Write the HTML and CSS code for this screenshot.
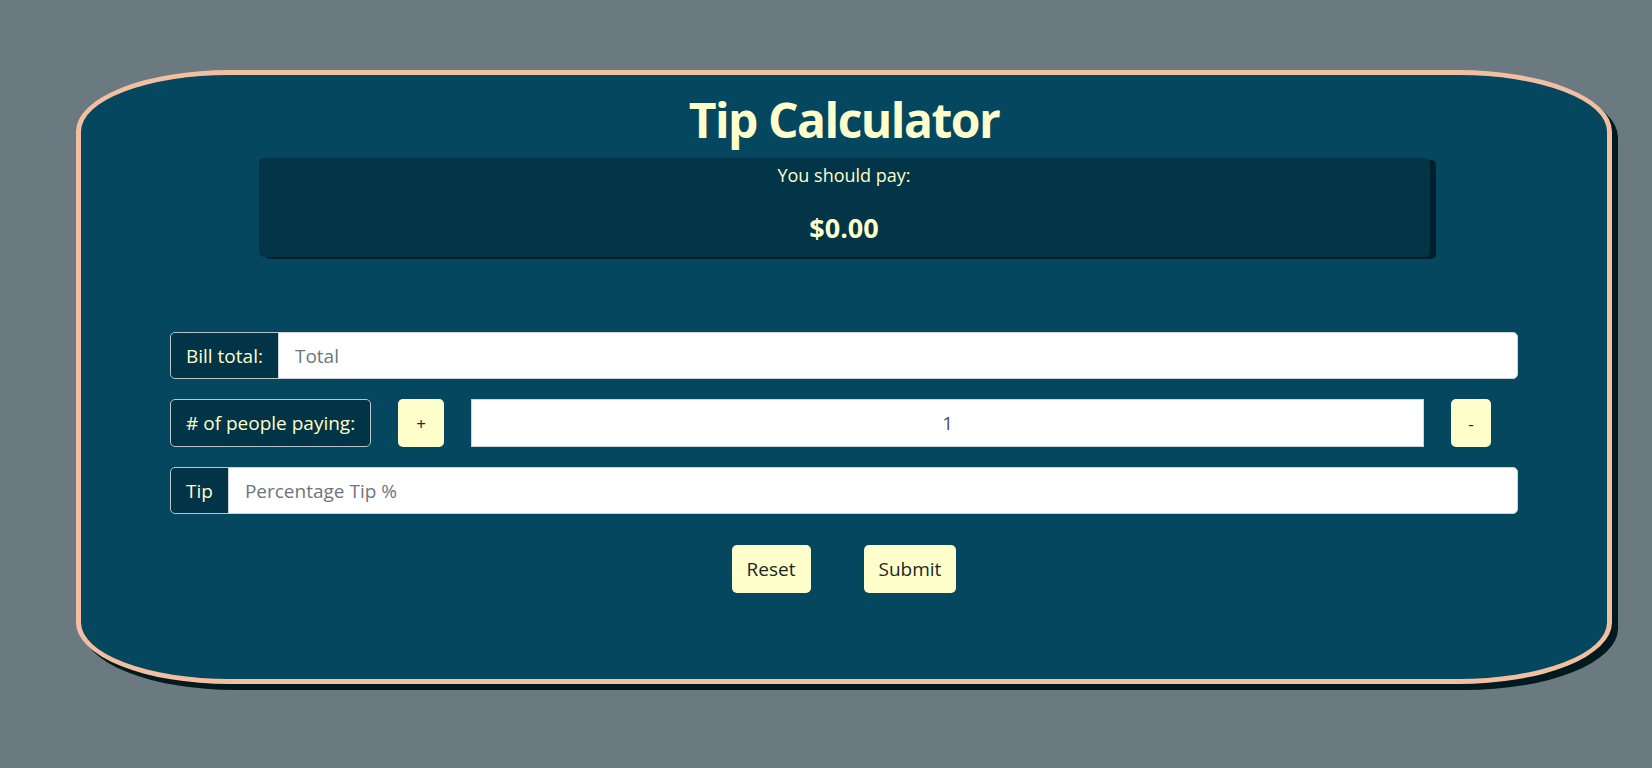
FILE: index.html
```html
<!DOCTYPE html>
<html lang="en">
<head>
<meta charset="utf-8">
<title>Tip Calculator</title>
<link rel="stylesheet" href="styles.css">
</head>
<body>
<main class="card">
  <h1 class="title">Tip Calculator</h1>
  <section class="result">
    <p class="result-label">You should pay:</p>
    <p class="result-value">$0.00</p>
  </section>
  <form class="form">
    <div class="row">
      <span class="addon addon-joined">Bill total:</span>
      <input class="field field-joined" type="text" placeholder="Total">
    </div>
    <div class="row row-people">
      <span class="addon">#&nbsp;of people paying:</span>
      <button type="button" class="btn btn-plus">+</button>
      <input class="field field-count" type="text" value="1">
      <button type="button" class="btn btn-minus">-</button>
    </div>
    <div class="row">
      <span class="addon addon-joined">Tip</span>
      <input class="field field-joined" type="text" placeholder="Percentage Tip %">
    </div>
    <div class="actions">
      <button type="button" class="btn btn-lg">Reset</button>
      <button type="button" class="btn btn-lg">Submit</button>
    </div>
  </form>
</main>
</body>
</html>
```

FILE: styles.css
```css
* { box-sizing: border-box; }

html, body {
  margin: 0;
  padding: 0;
}

body {
  background: #6a7a80;
  font-family: "Open Sans", "Noto Sans", sans-serif;
  padding: 70px 0 0 76px;
  min-height: 768px;
}

.card {
  width: 1536px;
  height: 614px;
  background: #04475e;
  border: 5px solid #f3bfa1;
  border-radius: 10%;
  box-shadow: 6px 6px 0 #011a20;
  display: flex;
  flex-direction: column;
  align-items: center;
  padding-top: 15px;
}

.title {
  margin: 0;
  font-size: 48px;
  line-height: 60px;
  font-weight: 700;
  color: #ffffcc;
  letter-spacing: -1.5px;
}

.result {
  width: 1171px;
  height: 99px;
  margin-top: 8px;
  background: #013547;
  border-radius: 5px;
  box-shadow: 6px 2px 0 #012029;
  text-align: center;
  color: #ffffcc;
  padding-top: 4px;
}

.result-label {
  margin: 0;
  font-size: 18px;
  line-height: 27px;
}

.result-value {
  margin: 23px 0 0;
  font-size: 27px;
  line-height: 32px;
  font-weight: 700;
}

.form {
  width: 1348px;
  margin-top: 75px;
  display: flex;
  flex-direction: column;
  gap: 20px;
}

.row {
  display: flex;
  align-items: stretch;
  height: 47px;
}

.row-people {
  gap: 27px;
  padding-right: 27px;
  height: 48px;
}

.addon {
  display: flex;
  align-items: center;
  padding: 0 15px;
  background: #013446;
  color: #ffffcc;
  border: 1px solid #b8c6cc;
  border-radius: 5px;
  font-size: 19px;
  white-space: nowrap;
}

.addon-joined {
  border-top-right-radius: 0;
  border-bottom-right-radius: 0;
}

.field {
  flex: 1;
  min-width: 0;
  border: 1px solid #ced4da;
  background: #ffffff;
  font-family: inherit;
  font-size: 19px;
  color: #495057;
  padding: 0 16px;
  border-radius: 5px;
  outline: none;
}

.field::placeholder {
  color: #6c757d;
}

.field-joined {
  border-top-left-radius: 0;
  border-bottom-left-radius: 0;
  margin-left: -1px;
}

.field-count {
  border-radius: 0;
  text-align: center;
}

.btn {
  border: none;
  background: #ffffcc;
  color: #212529;
  border-radius: 5px;
  font-family: inherit;
  cursor: pointer;
  padding: 0;
}

.btn-plus {
  width: 46px;
  font-size: 17px;
}

.btn-minus {
  width: 40px;
  font-size: 17px;
}

.actions {
  display: flex;
  justify-content: center;
  gap: 53px;
  margin-top: 11px;
}

.btn-lg {
  height: 48px;
  padding: 0 15px;
  font-size: 19px;
}
```
